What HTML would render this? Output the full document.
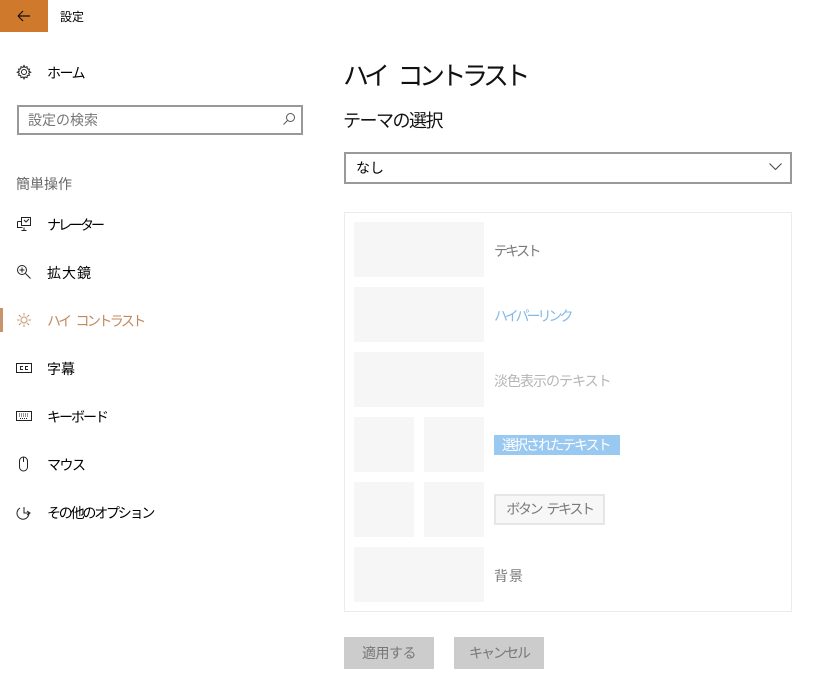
<!DOCTYPE html>
<html><head><meta charset="utf-8"><style>
*{margin:0;padding:0;box-sizing:border-box}
body{width:825px;height:689px;background:#fff;font-family:"Liberation Sans","Noto Sans CJK JP",sans-serif;color:#000;position:relative;overflow:hidden}
.a{position:absolute;white-space:nowrap}
.nav{font-size:14px;left:47px}
.ic{position:absolute;left:16px}
.sw{position:absolute;background:#f6f6f6}
.lb{position:absolute;left:494px;font-size:14px;color:#7a7a7a}
.sp{display:inline-block}
</style></head><body>
<div class="a" style="left:0;top:0;width:48px;height:32px;background:#cf792d"></div>
<svg class="a" style="left:17px;top:9px" width="14" height="14" viewBox="0 0 14 14"><path d="M1 7H13M1 7L6 2M1 7L6 12" stroke="#111" stroke-width="1.2" fill="none"/></svg>
<div class="a" style="left:60px;top:8px;font-size:12px">設定</div>

<svg class="ic" style="top:64px" width="16" height="16" viewBox="0 0 16 16"><circle cx="8" cy="8" r="2.5" fill="none" stroke="#222"/><path d="M8 1.5l1 2 2-.8.3 2.2 2.2.3-.8 2 2 1-2 1 .8 2-2.2.3-.3 2.2-2-.8-1 2-1-2-2 .8-.3-2.2-2.2-.3.8-2-2-1 2-1-.8-2 2.2-.3.3-2.2 2 .8z" fill="none" stroke="#222" stroke-width="1"/></svg>
<div class="a nav" style="top:63px;letter-spacing:-1.5px">ホーム</div>

<div class="a" style="left:17px;top:105px;width:286px;height:30px;border:2px solid #999"></div>
<div class="a" style="left:28px;top:110px;font-size:14px;color:#777">設定の検索</div>
<svg class="a" style="left:282px;top:112px" width="14" height="14" viewBox="0 0 14 14"><circle cx="8.5" cy="5.5" r="4" fill="none" stroke="#555"/><path d="M5.5 8.5L1.5 12.5" stroke="#555"/></svg>

<div class="a" style="left:16px;top:174px;font-size:14px;color:#666">簡単操作</div>

<svg class="ic" style="top:216px" width="16" height="16" viewBox="0 0 16 16" fill="none" stroke="#222"><path d="M5.5 1.5h9v8h-9zM1.5 5.5h4M1.5 5.5v6h5M8 11.5v3M5.5 14.5h5M8 4l2 2 3-3"/></svg>
<div class="a nav" style="top:215px;letter-spacing:-3px">ナレーター</div>
<svg class="ic" style="top:264px" width="16" height="16" viewBox="0 0 16 16" fill="none" stroke="#222"><circle cx="6" cy="6" r="4.5"/><path d="M9.5 9.5l5 5M6 3.5v5M3.5 6h5"/></svg>
<div class="a nav" style="top:263px;letter-spacing:1px">拡大鏡</div>
<div class="a" style="left:0;top:308px;width:3px;height:24px;background:#c8956b"></div>
<svg class="ic" style="top:312px" width="16" height="16" viewBox="0 0 16 16" fill="none" stroke="#c8956b"><circle cx="8" cy="8" r="3"/><path d="M8 1v2.5M8 12.5V15M1 8h2.5M12.5 8H15M3 3l2 2M11 11l2 2M13 3l-2 2M5 11l-2 2"/></svg>
<div class="a nav" style="top:311px;color:#c08a5e;letter-spacing:-2.6px">ハイ<span class="sp" style="width:6px"></span>コントラスト</div>
<svg class="ic" style="top:361px" width="16" height="14" viewBox="0 0 16 14" fill="none" stroke="#222"><rect x="0.5" y="2.5" width="15" height="9"/><path d="M7 5.5H4.5v3H7M12 5.5H9.5v3H12"/></svg>
<div class="a nav" style="top:359px">字幕</div>
<svg class="ic" style="top:410px" width="16" height="12" viewBox="0 0 16 12" fill="none" stroke="#222"><rect x="0.5" y="1.5" width="15" height="9"/><path d="M3 4h10M3 6h10M4 8.5h8" stroke-dasharray="1 1"/></svg>
<div class="a nav" style="top:407px;letter-spacing:-2px">キーボード</div>
<svg class="ic" style="top:456px" width="16" height="16" viewBox="0 0 16 16" fill="none" stroke="#222"><rect x="3.5" y="1" width="8" height="14" rx="4"/><path d="M7.5 1v5"/></svg>
<div class="a nav" style="top:455px;letter-spacing:-1.5px">マウス</div>
<svg class="ic" style="top:504px" width="16" height="16" viewBox="0 0 16 16" fill="none" stroke="#222"><path d="M4 4a6 6 0 1 0 9 5M8 3v6h6M11 7l3 2-3 2"/></svg>
<div class="a nav" style="top:503px;letter-spacing:-2.2px">その他のオプション</div>

<div class="a" style="left:343px;top:56px;font-size:26px;color:#111;letter-spacing:-4.5px">ハイ<span class="sp" style="width:12px"></span>コントラスト</div>
<div class="a" style="left:343px;top:107px;font-size:18px;color:#111;letter-spacing:-1.5px">テーマの選択</div>
<div class="a" style="left:344px;top:152px;width:448px;height:32px;border:2px solid #999"></div>
<div class="a" style="left:356px;top:158px;font-size:14px">なし</div>
<svg class="a" style="left:769px;top:163px" width="13" height="8" viewBox="0 0 13 8"><path d="M0.5 0.5L6.5 6.5L12.5 0.5" stroke="#444" fill="none"/></svg>

<div class="a" style="left:344px;top:212px;width:448px;height:400px;border:1px solid #ebebeb"></div>
<div class="sw" style="left:354px;top:222px;width:130px;height:55px"></div>
<div class="sw" style="left:354px;top:287px;width:130px;height:55px"></div>
<div class="sw" style="left:354px;top:352px;width:130px;height:55px"></div>
<div class="sw" style="left:354px;top:417px;width:60px;height:55px"></div>
<div class="sw" style="left:424px;top:417px;width:60px;height:55px"></div>
<div class="sw" style="left:354px;top:482px;width:60px;height:55px"></div>
<div class="sw" style="left:424px;top:482px;width:60px;height:55px"></div>
<div class="sw" style="left:354px;top:547px;width:130px;height:55px"></div>
<div class="lb" style="top:241px;letter-spacing:-2.7px">テキスト</div>
<div class="lb" style="top:306px;color:#84b8e6;letter-spacing:-3px">ハイパーリンク</div>
<div class="lb" style="top:371px;color:#b5b5b5;letter-spacing:-1px">淡色表示のテキスト</div>
<div class="lb" style="top:435px;left:494px;width:126px;height:20px;background:#99c9f0;color:#fff;padding-left:8px;line-height:20px;letter-spacing:-2px;overflow:hidden">選択されたテキスト</div>
<div class="lb" style="top:494px;width:111px;height:31px;background:#f7f7f7;border:2px solid #e6e6e6;line-height:27px;text-align:center;letter-spacing:-2.3px">ボタン<span class="sp" style="width:5px"></span>テキスト</div>
<div class="lb" style="top:566px;letter-spacing:1px">背景</div>

<div class="a" style="left:344px;top:637px;width:90px;height:32px;background:#cccccc;color:#777;font-size:14px;line-height:32px;text-align:center;letter-spacing:-0.5px">適用する</div>
<div class="a" style="left:454px;top:637px;width:90px;height:32px;background:#cccccc;color:#777;font-size:14px;line-height:32px;text-align:center;letter-spacing:-2px">キャンセル</div>
</body></html>
